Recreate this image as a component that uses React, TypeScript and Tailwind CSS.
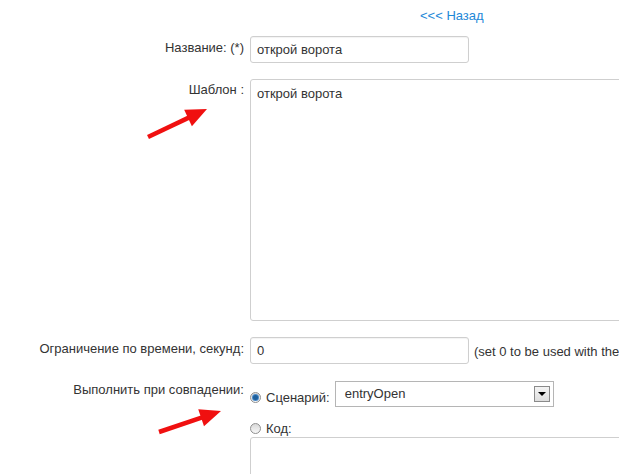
import type { ReactNode } from 'react';

const font = { fontFamily: '"Liberation Sans", Arial, sans-serif' };

function Row({ label, labelClass = 'pt-[4px]', children, className = '' }: { label?: string; labelClass?: string; children: ReactNode; className?: string }) {
  return (
    <div className={`flex items-start ${className}`}>
      <div className={`w-[244px] shrink-0 text-right text-[13px] leading-[15px] text-[#333] ${labelClass}`}>{label}</div>
      <div className="ml-[6px] min-w-0 flex-1">{children}</div>
    </div>
  );
}

function Radio({ checked }: { checked?: boolean }) {
  return (
    <span className="flex h-[11px] w-[11px] shrink-0 items-center justify-center rounded-full border border-[#8f8f8f] bg-gradient-to-b from-[#d8d8d8] to-[#f8f8f8]">
      {checked && <span className="h-[5px] w-[5px] rounded-full bg-[#1d5f9c] ring-1 ring-[#4a8ac8]" />}
    </span>
  );
}

function Arrow({ x1, y1, x2, y2 }: { x1: number; y1: number; x2: number; y2: number }) {
  const dx = x2 - x1;
  const dy = y2 - y1;
  const len = Math.hypot(dx, dy);
  const ux = dx / len;
  const uy = dy / len;
  const hl = 21;
  const hw = 9;
  const bx = x2 - ux * hl;
  const by = y2 - uy * hl;
  const p1 = `${bx - uy * hw},${by + ux * hw}`;
  const p2 = `${bx + uy * hw},${by - ux * hw}`;
  return (
    <g>
      <line x1={x1} y1={y1} x2={bx + ux * 2} y2={by + uy * 2} stroke="#f01010" strokeWidth={4.5} />
      <polygon points={`${x2},${y2} ${p1} ${p2}`} fill="#f01010" />
    </g>
  );
}

export default function App() {
  return (
    <div className="relative h-[474px] w-[619px] overflow-hidden bg-white" style={font}>
      <div className="pt-[8px]">
        <Row label="" labelClass="">
          <a href="#" className="block pl-[170px] text-[13px] leading-[15px] text-[#1e88d8]">
            &lt;&lt;&lt; Назад
          </a>
        </Row>

        <Row label="Название: (*)" className="mt-[13px]">
          <input
            defaultValue="открой ворота"
            className="h-[27px] w-[219px] rounded-[3px] border border-[#cfcfcf] px-[6px] text-[13px] text-[#333] shadow-[inset_0_1px_1px_rgba(0,0,0,0.05)] outline-none"
          />
        </Row>

        <Row label="Шаблон :" labelClass="pt-[3px]" className="mt-[16px]">
          <textarea
            defaultValue="открой ворота"
            className="block h-[242px] w-[420px] resize-none rounded-[3px] border border-[#cfcfcf] px-[6px] py-[6px] text-[13px] leading-[15px] text-[#333] outline-none"
          />
        </Row>

        <Row label="Ограничение по времени, секунд:" className="mt-[16px]">
          <div className="flex items-center whitespace-nowrap">
            <input
              defaultValue="0"
              className="h-[27px] w-[219px] shrink-0 rounded-[3px] border border-[#cfcfcf] px-[6px] text-[13px] text-[#333] shadow-[inset_0_1px_1px_rgba(0,0,0,0.05)] outline-none"
            />
            <span className="ml-[5px] pt-[3px] text-[13px] text-[#333]">(set 0 to be used with the</span>
          </div>
        </Row>

        <Row label="Выполнить при совпадении:" labelClass="pt-[1px]" className="mt-[17px]">
          <div className="flex items-start">
            <label className="flex items-center gap-[5px] pt-[9px] text-[13px] leading-[15px] text-[#333]">
              <Radio checked />
              Сценарий:
            </label>
            <div className="ml-[5px] flex h-[26px] w-[219px] items-center justify-between border border-[#b5b5b5] pl-[9px] pr-[3px] text-[13px] text-[#333]">
              <span>entryOpen</span>
              <span className="flex h-[16px] w-[16px] items-center justify-center border border-[#8a8a8a] bg-gradient-to-b from-[#f4f4f4] to-[#dedede]">
                <span className="h-0 w-0 border-x-[4px] border-t-[4px] border-x-transparent border-t-black" />
              </span>
            </div>
          </div>
          <label className="mt-[12px] flex h-[18px] items-center gap-[5px] text-[13px] leading-[15px] text-[#333]">
            <Radio />
            Код:
          </label>
          <div className="h-[60px] w-[420px] rounded-[3px] border border-[#cfcfcf]" />
        </Row>
      </div>

      <svg className="pointer-events-none absolute inset-0" width={619} height={474}>
        <Arrow x1={148} y1={137} x2={207} y2={109} />
        <Arrow x1={159} y1={432} x2={221} y2={411} />
      </svg>
    </div>
  );
}
